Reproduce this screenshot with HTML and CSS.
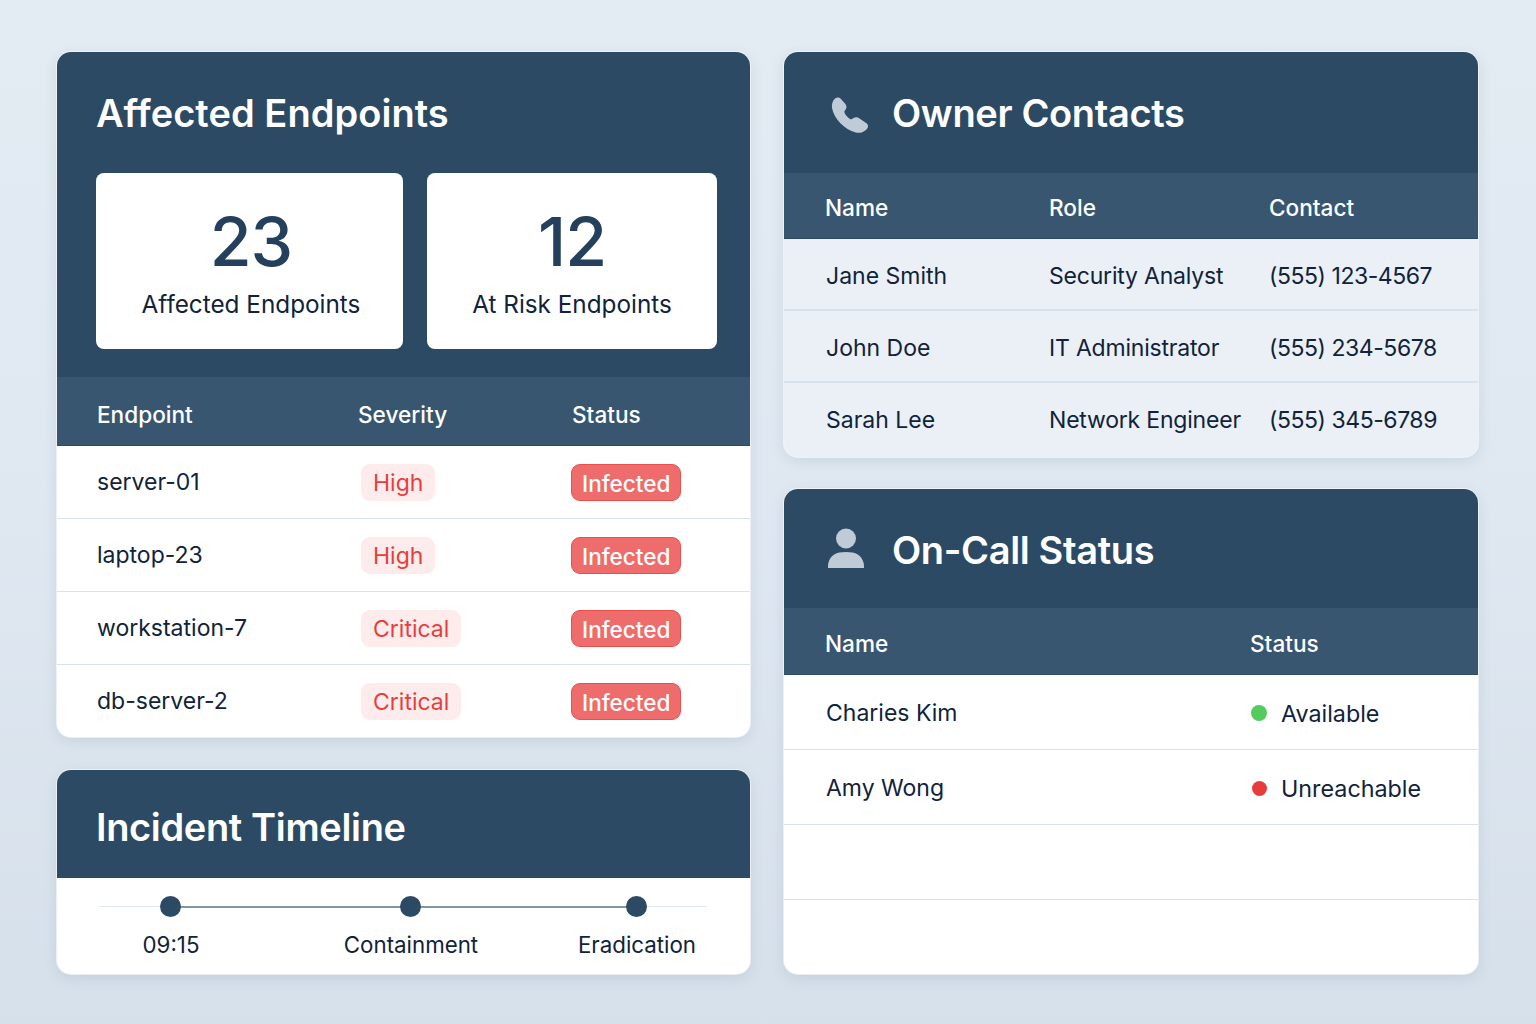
FILE: index.html
```html
<!DOCTYPE html>
<html lang="en">
<head>
<meta charset="utf-8">
<title>Incident Dashboard</title>
<link rel="stylesheet" href="styles.css">
</head>
<body>
<main class="board">
  <div class="col col-left">
    <section class="card card-endpoints">
      <header class="hero">
        <h2 class="title title-wide">Affected Endpoints</h2>
        <div class="stats">
          <div class="stat stat-a"><div class="num">23</div><div class="lbl">Affected Endpoints</div></div>
          <div class="stat stat-b"><div class="num">12</div><div class="lbl">At Risk Endpoints</div></div>
        </div>
      </header>
      <div class="thead tall cols-end"><span>Endpoint</span><span>Severity</span><span>Status</span></div>
      <div class="tbody">
        <div class="row cols-end"><span>server-01</span><span><b class="sev">High</b></span><span><b class="inf">Infected</b></span></div>
        <div class="row cols-end"><span>laptop-23</span><span><b class="sev">High</b></span><span><b class="inf">Infected</b></span></div>
        <div class="row cols-end"><span>workstation-7</span><span><b class="sev">Critical</b></span><span><b class="inf">Infected</b></span></div>
        <div class="row cols-end"><span>db-server-2</span><span><b class="sev">Critical</b></span><span><b class="inf">Infected</b></span></div>
      </div>
    </section>
    <section class="card card-timeline">
      <header class="bar bar-time"><h2 class="title">Incident Timeline</h2></header>
      <div class="timeline">
        <div class="stop"><i class="dot"></i><span>09:15</span></div>
        <div class="stop"><i class="dot"></i><span>Containment</span></div>
        <div class="stop"><i class="dot"></i><span>Eradication</span></div>
      </div>
    </section>
  </div>
  <div class="col col-right">
    <section class="card card-contacts">
      <header class="bar bar-icon bar-contacts">
        <svg class="ico" viewBox="0 0 44 44" aria-hidden="true"><path transform="translate(2 5.500)" d="M4.500 2.500C6.500.5 9 .5 10.500 2l4.500 5c2 2.300 1.800 4.200.6 6l-1.400 2.200c1 3.300 3.800 6.300 6.900 7.800l2.400-1.400c2-1.100 4-1 6 .4l7 4.700c2 1.500 2.100 4 .2 6-3 3-7 4.300-11 3.300C14.500 33 4 22.500 2 11.500c-.5-3.300.5-7 2.500-9z"/></svg>
        <h2 class="title">Owner Contacts</h2>
      </header>
      <div class="thead cols-con"><span>Name</span><span>Role</span><span>Contact</span></div>
      <div class="tbody tint">
        <div class="row cols-con"><span>Jane Smith</span><span class="role">Security Analyst</span><span class="tel">(555) 123-4567</span></div>
        <div class="row cols-con"><span>John Doe</span><span class="role">IT Administrator</span><span class="tel">(555) 234-5678</span></div>
        <div class="row cols-con"><span>Sarah Lee</span><span class="role">Network Engineer</span><span class="tel">(555) 345-6789</span></div>
      </div>
    </section>
    <section class="card card-oncall">
      <header class="bar bar-icon bar-oncall">
        <svg class="ico" viewBox="0 0 44 44" aria-hidden="true"><circle cx="18" cy="10.500" r="10"/><path d="M0 40c0-2 0-4 .5-5.500C2.500 27 8 24 18 24s15.500 3 17.500 10.500C36 36 36 38 36 40z"/></svg>
        <h2 class="title">On-Call Status</h2>
      </header>
      <div class="thead tall-call cols-call"><span>Name</span><span>Status</span></div>
      <div class="tbody">
        <div class="row cols-call"><span>Charies Kim</span><span class="state"><i class="led green"></i>Available</span></div>
        <div class="row cols-call"><span>Amy Wong</span><span class="state"><i class="led red"></i>Unreachable</span></div>
        <div class="row cols-call"></div>
        <div class="row cols-call"></div>
      </div>
    </section>
  </div>
</main>
</body>
</html>
```
FILE: styles.css
```css
* { box-sizing: border-box; }
html, body { margin: 0; height: 100%; }
body {
  width: 1536px;
  height: 1024px;
  overflow: hidden;
  background: linear-gradient(180deg, #e3ebf3 0%, #dfe8f1 50%, #d6e0ea 100%);
  font-family: Inter, "Liberation Sans", sans-serif;
  color: #10233b;
}
.board {
  display: grid;
  grid-template-columns: 693px 694px;
  column-gap: 34px;
  padding: 52px 0 50px 57px;
  height: 1024px;
}
.col { display: flex; flex-direction: column; min-height: 0; }
.col-left { gap: 33px; }
.col-right { gap: 32px; }
.card {
  background: #fff;
  border-radius: 14px;
  overflow: hidden;
  box-shadow: 0 0 0 1px rgba(255,255,255,.6), 0 4px 14px rgba(70,100,130,.14);
  display: flex;
  flex-direction: column;
}
.card-endpoints { height: 685px; }
.card-timeline { height: 204px; }
.card-contacts { height: 405px; }
.card-oncall { height: 485px; }

.title {
  margin: 0;
  font-size: 38px;
  line-height: 44px;
  font-weight: 600;
  color: #fff;
  letter-spacing: -.35px;
}
.title-wide { letter-spacing: .05px; margin-left: -1px; }
.hero {
  background: #2c4a63;
  height: 325px;
  padding: 39px 33px 0 40px;
}
.stats { display: flex; gap: 24px; margin-top: 38px; margin-left: -1px; }
.stat {
  height: 176px;
  background: #fff;
  border-radius: 8px;
  text-align: center;
  padding-top: 30px;
}
.stat-a { width: 307px; padding-left: 3px; }
.stat-b { width: 290px; }
.num {
  font-size: 68px;
  line-height: 76px;
  font-weight: 550;
  color: #24405c;
  letter-spacing: -1px;
}
.lbl { font-size: 24.300px; line-height: 30px; margin-top: 10px; }

.bar { background: #2c4a63; display: flex; align-items: center; }
.bar-time { height: 108px; padding: 6px 0 0 39px; }
.bar-icon { padding-left: 44px; gap: 20px; }
.bar-contacts { height: 121px; }
.bar-oncall { height: 119px; padding-top: 3px; }
.ico { width: 44px; height: 44px; fill: #bfcbd6; flex: none; }

.thead {
  background: #38566f;
  color: #fff;
  font-size: 22.600px;
  font-weight: 500;
  height: 66px;
  padding-top: 4px;
  align-items: center;
  border-bottom: 1px solid #2c4a63;
}
.thead.tall { height: 69px; padding-top: 6px; }
.thead.tall-call { height: 67px; padding-top: 5px; }
.cols-end { display: grid; grid-template-columns: 261px 214px 1fr; padding-left: 40px; }
.cols-con { display: grid; grid-template-columns: 224px 220px 1fr; padding-left: 41px; }
.cols-call { display: grid; grid-template-columns: 425px 1fr; padding-left: 41px; }

.tbody { flex: 1; display: flex; flex-direction: column; min-height: 0; }
.row {
  flex: 1;
  align-items: center;
  font-size: 23px;
  border-bottom: 1px solid #d8e2ec;
}
.row:last-child { border-bottom: 0; }
.tint { background: #eaf0f6; }
.tint .row { flex: none; height: 72px; border-bottom-width: 2px; padding-top: 3px; }
.tint .row:last-child { flex: 1; height: auto; border-bottom: 0; padding-top: 0; }
.tint span:first-child { padding-left: 1px; }
.role { letter-spacing: -.2px; }
.tel { letter-spacing: -.45px; }
.card-oncall .row { padding-left: 42px; padding-top: 2px; }

.sev, .inf {
  display: inline-block;
  font-size: 23px;
  height: 37px;
  border-radius: 9px;
  padding: 0 12px;
}
.sev { background: #feecec; color: #e63e3e; font-weight: 400; line-height: 39px; margin-left: 3px; padding-right: 11.500px; }
.inf {
  background: #ee6c6c;
  color: #fff;
  font-weight: 500;
  font-size: 22.500px;
  border: 1px solid #e85050;
  line-height: 37px;
  padding: 0 10px;
  margin-left: -1px;
}

.state { display: flex; align-items: center; gap: 14px; font-size: 23.300px; }
.led { width: 16px; height: 16px; border-radius: 50%; flex: none; }
.led.green { background: #55cb5f; }
.led.red { background: #e83c3c; width: 15px; height: 15px; margin: 0 .5px; }

.timeline {
  position: relative;
  flex: 1;
  display: grid;
  grid-template-columns: 140px 340px 112px;
  padding: 18px 0 0 43px;
}
.timeline::before {
  content: "";
  position: absolute;
  left: 42px;
  right: 43px;
  top: 28px;
  height: 1px;
  background: #e0e8f0;
}
.timeline::after {
  content: "";
  position: absolute;
  left: 113px;
  width: 466px;
  top: 28px;
  height: 2px;
  background: #7f96a9;
}
.stop { display: flex; flex-direction: column; align-items: center; position: relative; z-index: 1; }
.dot { width: 21px; height: 21px; border-radius: 50%; background: #2c4a63; }
.stop span { font-size: 22.300px; line-height: 28px; margin-top: 14px; margin-left: 2px; white-space: nowrap; }
```
